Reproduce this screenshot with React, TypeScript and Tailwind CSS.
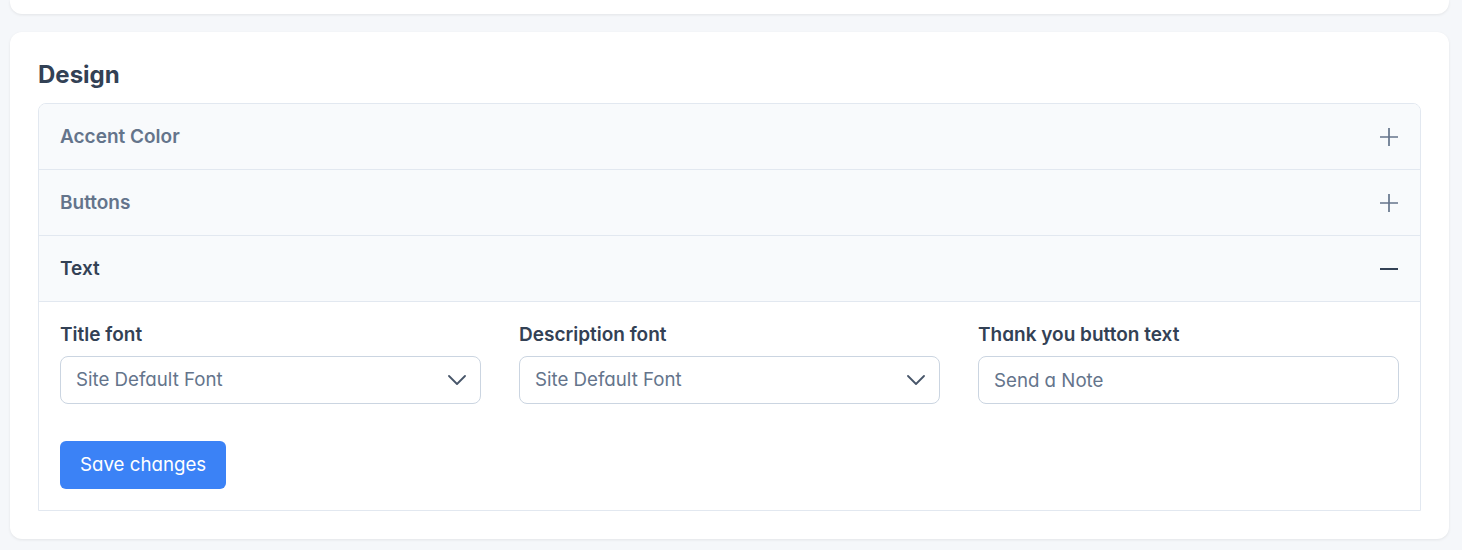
const font = "font-['Inter','Noto_Sans',sans-serif] [font-feature-settings:'cv11']";

function PlusIcon() {
  return (
    <svg width="20" height="20" viewBox="0 0 20 20" className="text-[#64748b]">
      <path d="M1 10h18M10 1v18" stroke="currentColor" strokeWidth="1.7" fill="none" />
    </svg>
  );
}

function MinusIcon() {
  return (
    <svg width="20" height="20" viewBox="0 0 20 20" className="text-[#334155]">
      <path d="M1 10h18" stroke="currentColor" strokeWidth="2" fill="none" />
    </svg>
  );
}

function Chevron() {
  return (
    <svg width="18" height="10" viewBox="0 0 18 10" className="text-[#475569]">
      <path d="M1 1l8 8 8-8" stroke="currentColor" strokeWidth="1.8" fill="none" strokeLinecap="round" strokeLinejoin="round" />
    </svg>
  );
}

function Row({ title, open }: { title: string; open?: boolean }) {
  return (
    <div className="flex h-[66px] items-center justify-between border-b border-[#e2e8f0] bg-[#f8fafc] px-[21px]">
      <span className={`pt-[2px] text-[19px] font-semibold ${open ? "text-[#334155]" : "text-[#64748b]"}`}>{title}</span>
      {open ? <MinusIcon /> : <PlusIcon />}
    </div>
  );
}

function Select({ label }: { label: string }) {
  return (
    <div className="flex flex-col">
      <label className="mb-[10px] text-[19px] leading-[22px] font-semibold text-[#334155]">{label}</label>
      <div className="flex h-[48px] items-center justify-between rounded-lg border border-[#cbd5e1] bg-white pl-[15px] pr-[14px]">
        <span className="text-[18.7px] text-[#64748b]">Site Default Font</span>
        <Chevron />
      </div>
    </div>
  );
}

export default function App() {
  return (
    <div className={`min-h-[550px] bg-[#f5f7fa] pl-[10px] pr-[13px] ${font}`}>
      <div className="h-[14px] rounded-b-xl bg-white shadow-[0_1px_3px_rgba(0,0,0,0.08)]" />
      <div className="mt-[18px] rounded-xl bg-white px-[28px] pt-[28px] pb-[28px] shadow-[0_1px_3px_rgba(0,0,0,0.08)]">
        <h2 className="mb-[13px] text-[24px] leading-[30px] font-bold text-[#334155]">Design</h2>
        <div className="overflow-hidden rounded-t-lg border border-[#e2e8f0]">
          <Row title="Accent Color" />
          <Row title="Buttons" />
          <Row title="Text" open />
          <div className="px-[21px] pt-[22px] pb-[21px]">
            <div className="grid grid-cols-3 gap-x-[38px]">
              <Select label="Title font" />
              <Select label="Description font" />
              <div className="flex flex-col">
                <label className="mb-[10px] text-[19px] leading-[22px] font-semibold text-[#334155]">Thank you button text</label>
                <input
                  className="h-[48px] rounded-lg border border-[#cbd5e1] bg-white px-[15px] text-[18.7px] text-[#64748b] outline-none placeholder:text-[#64748b]"
                  placeholder="Send a Note"
                />
              </div>
            </div>
            <button className="mt-[37px] h-[48px] rounded-md bg-[#3b82f6] px-[20px] text-[18.7px] text-white">
              Save changes
            </button>
          </div>
        </div>
      </div>
    </div>
  );
}
